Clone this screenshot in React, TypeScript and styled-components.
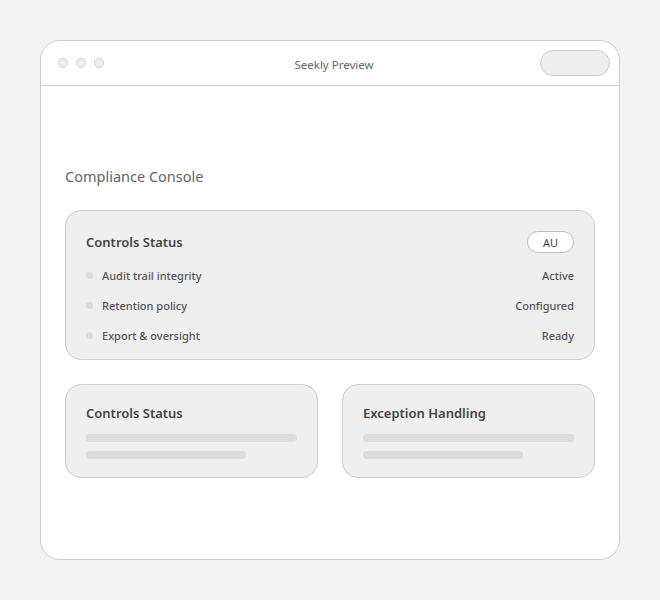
import React from "react";
import styled, { createGlobalStyle } from "styled-components";

const Global = createGlobalStyle`
  html, body { margin: 0; padding: 0; background: #f2f2f2; }
  body { font-family: "Noto Sans", "DejaVu Sans", sans-serif; }
  * { box-sizing: border-box; }
`;

const Page = styled.div`
  width: 660px;
  height: 600px;
  padding: 40px;
`;

const Window = styled.div`
  width: 580px;
  height: 520px;
  background: #fff;
  border: 1px solid #cccccc;
  border-radius: 20px;
  overflow: hidden;
  display: flex;
  flex-direction: column;
`;

const TitleBar = styled.div`
  height: 45px;
  flex: none;
  border-bottom: 1px solid #cfcfcf;
  display: grid;
  grid-template-columns: 1fr auto 1fr;
  align-items: center;
  padding: 0 9px 0 17px;
`;

const Dots = styled.div`
  display: flex;
  gap: 8px;
`;

const Dot = styled.span`
  width: 10px;
  height: 10px;
  border-radius: 50%;
  background: #efefef;
  border: 1px solid #cfcfcf;
`;

const WinTitle = styled.div`
  font-size: 11.5px;
  color: #666;
  margin-top: 3px;
`;

const PillButton = styled.div`
  justify-self: end;
  width: 70px;
  height: 26px;
  border-radius: 13px;
  background: #eeeeee;
  border: 1px solid #cccccc;
`;

const Content = styled.div`
  padding: 79px 24px 0 24px;
  display: flex;
  flex-direction: column;
`;

const Heading = styled.h1`
  margin: 0 0 23px 0;
  font-size: 14.5px;
  font-weight: 400;
  color: #666;
  line-height: 22px;
`;

const Card = styled.div`
  background: #efefef;
  border: 1px solid #cccccc;
  border-radius: 16px;
  padding: 20px 20px 9px 20px;
`;

const CardHeader = styled.div`
  display: flex;
  justify-content: space-between;
  align-items: center;
  height: 22px;
  margin-bottom: 7px;
`;

const CardTitle = styled.div`
  font-size: 13px;
  font-weight: 600;
  color: #444;
  line-height: 18px;
`;

const Badge = styled.div`
  width: 47px;
  height: 22px;
  border-radius: 11px;
  background: #fff;
  border: 1px solid #bbbbbb;
  font-size: 11px;
  color: #444;
  display: flex;
  align-items: center;
  justify-content: center;
`;

const Row = styled.div`
  height: 30px;
  display: flex;
  align-items: center;
  font-size: 11px;
  font-weight: 500;
  color: #555;
`;

const RowDot = styled.span`
  width: 7px;
  height: 7px;
  border-radius: 50%;
  background: #dcdcdc;
  margin: 0 9px 0 0;
`;

const RowLabel = styled.span`
  flex: 1;
`;

const RowValue = styled.span``;

const Grid = styled.div`
  display: grid;
  grid-template-columns: minmax(0, 1fr) minmax(0, 1fr);
  gap: 24px;
  margin-top: 24px;
`;

const SmallCard = styled(Card)`
  height: 94px;
  padding: 19px 20px;
`;

const Bar = styled.div<{ $w: number; $gap: number }>`
  height: 8px;
  border-radius: 4px;
  background: #dcdcdc;
  width: ${(p) => p.$w}%;
  margin-top: ${(p) => p.$gap}px;
`;

const rows = [
  ["Audit trail integrity", "Active"],
  ["Retention policy", "Configured"],
  ["Export & oversight", "Ready"],
];

export default function App() {
  return (
    <>
      <Global />
      <Page>
        <Window>
          <TitleBar>
            <Dots>
              <Dot />
              <Dot />
              <Dot />
            </Dots>
            <WinTitle>Seekly Preview</WinTitle>
            <PillButton />
          </TitleBar>
          <Content>
            <Heading>Compliance Console</Heading>
            <Card>
              <CardHeader>
                <CardTitle>Controls Status</CardTitle>
                <Badge>AU</Badge>
              </CardHeader>
              {rows.map(([l, v]) => (
                <Row key={l}>
                  <RowDot />
                  <RowLabel>{l}</RowLabel>
                  <RowValue>{v}</RowValue>
                </Row>
              ))}
            </Card>
            <Grid>
              <SmallCard>
                <CardTitle>Controls Status</CardTitle>
                <Bar $w={100} $gap={12} />
                <Bar $w={76} $gap={9} />
              </SmallCard>
              <SmallCard>
                <CardTitle>Exception Handling</CardTitle>
                <Bar $w={100} $gap={12} />
                <Bar $w={76} $gap={9} />
              </SmallCard>
            </Grid>
          </Content>
        </Window>
      </Page>
    </>
  );
}
